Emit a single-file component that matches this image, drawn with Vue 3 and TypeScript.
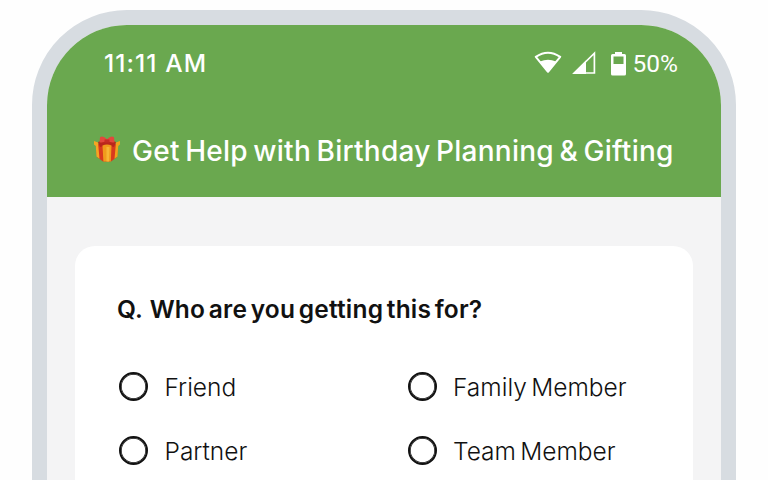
<script setup lang="ts">
interface Option {
  id: string
  label: string
}

const options: Option[] = [
  { id: 'friend', label: 'Friend' },
  { id: 'family', label: 'Family Member' },
  { id: 'partner', label: 'Partner' },
  { id: 'team', label: 'Team Member' },
]
</script>

<template>
  <main class="stage">
    <div class="phone">
      <header class="header">
        <div class="status">
          <span class="time">11:11 AM</span>
          <div class="indicators">
            <svg class="wifi" width="28" height="24" viewBox="0 0 28 24">
              <path d="M1.8 5.8Q14 -2.4 26.2 5.8L14 20.8Z" fill="none" stroke="#fff" stroke-width="2" stroke-linejoin="round" />
              <path d="M6 10.6Q14 7 22 10.6L14 21Z" fill="#fff" />
            </svg>
            <svg class="signal" width="24" height="24" viewBox="0 0 24 24">
              <path d="M2.2 22L22.4 2.2V22Z" fill="none" stroke="#fff" stroke-width="1.7" />
              <path d="M0.5 23L14 9.5V23Z" fill="#fff" />
            </svg>
            <svg class="battery" width="15" height="25" viewBox="0 0 15 25">
              <path fill-rule="evenodd" d="M4 1H11V3H13.5Q15 3 15 4.5V23Q15 24.5 13.5 24.5H1.5Q0 24.5 0 23V4.5Q0 3 1.5 3H4ZM2.5 5.5V13H12.5V5.5Z" fill="#fff" />
            </svg>
            <span class="percent">50%</span>
          </div>
        </div>
        <h1 class="title">
          <svg class="gift" width="28" height="28" viewBox="0 0 28 28">
            <path d="M2.5 8L14 12L25 8L24 22L18 26.5H10L4 22Z" fill="#d83a1e" />
            <path d="M1 6L5 7.5L6.5 23.8L3.5 21.5L2.8 11L1 9.5Z" fill="#f5a623" />
            <path d="M27 6L23 7.5L21.5 23.8L24.5 21.5L25.2 11L27 9.5Z" fill="#f0a21c" />
            <path d="M5 7L14 4L23 7L21 12L14 10L7 12Z" fill="#b9261c" />
            <path d="M9.5 10.5Q14 8.5 18.5 10.5L17.8 26.5H10.4Z" fill="#f09a1c" />
            <path d="M13.5 12H16.5L16 26.5H13.5Z" fill="#f7b535" />
            <path d="M14 4.2Q10 0 7 2.2L6.5 7.2Q10 8 14 5.8Q18 8 21.5 7.2L21 2.2Q18 0 14 4.2Z" fill="#e2473c" />
            <path d="M11.5 4.5H16.5V7.5H11.5Z" fill="#c62c25" />
          </svg>
          <span class="title-text">Get Help with Birthday Planning &amp; Gifting</span>
        </h1>
      </header>
      <section class="card">
        <h2 class="question"><span class="prefix">Q.</span> Who are you getting this for?</h2>
        <div class="options">
          <label v-for="option in options" :key="option.id" class="option">
            <input class="radio" type="radio" name="recipient" :value="option.id" />
            <span class="label">{{ option.label }}</span>
          </label>
        </div>
      </section>
    </div>
  </main>
</template>

<style>
body {
  margin: 0;
  background: #fefefe;
}
</style>

<style scoped>
.stage {
  box-sizing: border-box;
  height: 480px;
  padding: 10px 32px 0;
  overflow: hidden;
  font-family: Inter, "Liberation Sans", sans-serif;
}
.phone {
  box-sizing: border-box;
  width: 704px;
  height: 620px;
  border: 15px solid #d7dce1;
  border-radius: 95px;
  background: #f4f4f5;
  overflow: hidden;
}
.header {
  box-sizing: border-box;
  height: 172px;
  padding: 21px 43px 0 57px;
  background: #6aa84f;
  color: #fff;
}
.status {
  display: flex;
  justify-content: space-between;
  align-items: center;
  height: 34px;
}
.time {
  font-size: 24.5px;
  font-weight: 500;
  letter-spacing: 1.1px;
}
.indicators {
  display: flex;
  align-items: center;
}
.signal {
  margin-left: 10px;
}
.battery {
  margin-left: 15px;
}
.percent {
  margin-left: 7px;
  font-family: Roboto, sans-serif;
  font-size: 24.5px;
}
.title {
  display: flex;
  align-items: center;
  height: 36px;
  margin: 52px -20px 0 -11px;
  font-size: 28px;
  font-weight: 500;
  letter-spacing: 0.25px;
  word-spacing: -2.2px;
  white-space: nowrap;
}
.gift {
  flex: none;
  margin-bottom: 2px;
}
.title-text {
  margin: 2px 0 0 11px;
}
.card {
  box-sizing: border-box;
  width: 618px;
  height: 400px;
  margin: 49px 0 0 28px;
  padding: 45px 0 0 42px;
  border-radius: 20px;
  background: #fff;
  color: #111;
}
.question {
  height: 36px;
  margin: 0;
  font-size: 24.5px;
  font-weight: 600;
  line-height: 36px;
  letter-spacing: 0.2px;
  word-spacing: -2.8px;
  white-space: nowrap;
}
.prefix {
  margin-right: 3px;
}
.options {
  display: grid;
  grid-template-columns: 288.5px 1fr;
  grid-auto-rows: 64px;
  margin-top: 28px;
}
.option {
  display: flex;
  align-items: center;
  white-space: nowrap;
}
.radio {
  appearance: none;
  box-sizing: border-box;
  flex: none;
  width: 29px;
  height: 29px;
  margin: 0 16.5px 2px 2px;
  border: 2px solid #111;
  border-radius: 50%;
  box-shadow: inset 0 0 0 0.7px #111;
}
.label {
  font-size: 24.5px;
  font-weight: 300;
  word-spacing: -2.6px;
}
</style>
